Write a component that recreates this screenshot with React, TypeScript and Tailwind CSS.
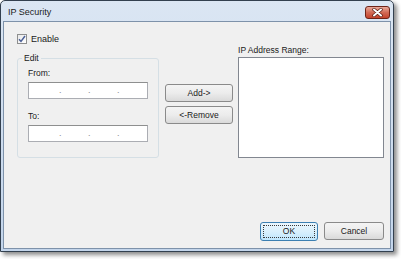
import React from "react";

const font = { fontFamily: '"Liberation Sans", Arial, sans-serif' };

const IpInput = () => (
  <div className="h-[17px] w-[120px] border border-[#abadb3] border-t-[#8e8f8f] bg-white flex items-end pb-[3px] pl-[30px] text-[9px] leading-[9px] text-[#8a8a8a]">
    <span className="w-[29px]">.</span>
    <span className="w-[29px]">.</span>
    <span className="w-[29px]">.</span>
  </div>
);

const Button = ({ label, w, primary }: { label: string; w: string; primary?: boolean }) => (
  <button
    className={
      primary
        ? `${w} h-[19px] rounded-[3px] border border-[#3c7fb1] bg-gradient-to-b from-[#eaf6fd] via-[#d9f0fc] to-[#bee6fd] p-[2px] text-[8.5px] text-[#1a1a1a]`
        : `${w} h-[18px] rounded-[3px] border border-[#8a8a8a] bg-gradient-to-b from-[#f4f4f4] via-[#ececec] to-[#dadada] text-[8.5px] leading-[16px] text-[#1a1a1a]`
    }
  >
    {primary ? (
      <span className="flex h-full w-full items-center justify-center border border-dotted border-[#3a3a3a]">{label}</span>
    ) : (
      label
    )}
  </button>
);

export default function App() {
  return (
    <div className="w-[401px] h-[259px] bg-white" style={font}>
      <div className="flex h-[252px] w-[394px] flex-col rounded-t-[5px] border border-[#33404f] bg-gradient-to-b from-[#dbe6f3] to-[#c3d5eb] px-[2px] pb-[2px] shadow-[3px_3px_4px_rgba(0,0,0,0.45)]">
        {/* title bar */}
        <div className="flex h-[20px] items-start justify-between">
          <span className="pl-[5px] pt-[5px] text-[9px] leading-[12px] text-[#1b1b1b]">IP Security</span>
          <div className="mt-[5px] mr-[1px] flex h-[13px] w-[25px] items-center justify-center rounded-[3px] border border-[#6e2418] bg-gradient-to-b from-[#e9a99a] via-[#d26a55] to-[#c4412a]">
            <svg width="11" height="9" viewBox="0 0 11 9">
              <path d="M2 1.5 L9 7.5 M9 1.5 L2 7.5" stroke="#5a1e14" strokeWidth="3.4" strokeLinecap="round" />
              <path d="M2 1.5 L9 7.5 M9 1.5 L2 7.5" stroke="#ffffff" strokeWidth="2" strokeLinecap="round" />
            </svg>
          </div>
        </div>

        {/* client area */}
        <div className="flex flex-1 flex-col border border-[#7e92aa] bg-[#f0f0f0] pl-[13px] pr-[6px] pt-[12px] pb-[7px] text-[8.5px] text-[#1a1a1a]">
          <div className="flex h-[10px] items-center gap-[4px]">
            <div className="flex h-[10px] w-[10px] items-center justify-center border border-[#8e8f8f] bg-gradient-to-br from-[#e9e9e9] to-white">
              <svg width="8" height="8" viewBox="0 0 8 8">
                <path d="M1 4.2 L3 6.4 L7 1" stroke="#4a5f97" strokeWidth="1.5" fill="none" />
              </svg>
            </div>
            <span className="text-[9px] leading-[10px]">Enable</span>
          </div>

          <div className="flex items-start">
            {/* Edit group */}
            <div className="relative mt-[14px] h-[100px] w-[143px] rounded-[3px] border border-[#d5dfe5] pl-[10px] pt-[8px]">
              <span className="absolute -top-[7px] left-[4px] bg-[#f0f0f0] px-[2px] leading-[12px]">Edit</span>
              <div className="h-[12px] leading-[12px]">From:</div>
              <div className="mt-[3px]">
                <IpInput />
              </div>
              <div className="mt-[11px] h-[12px] leading-[12px]">To:</div>
              <div className="mt-[3px]">
                <IpInput />
              </div>
            </div>

            {/* middle buttons */}
            <div className="ml-[6px] mt-[40px] flex flex-col gap-[4px]">
              <Button label="Add->" w="w-[68px]" />
              <Button label="<-Remove" w="w-[68px]" />
            </div>

            {/* list */}
            <div className="ml-[5px] flex w-[147px] flex-col">
              <div className="h-[13px] leading-[12px]">IP Address Range:</div>
              <div className="h-[101px] border border-[#828790] bg-white" />
            </div>
          </div>

          <div className="mt-auto flex justify-end gap-[6px]">
            <Button label="OK" w="w-[58px]" primary />
            <Button label="Cancel" w="w-[60px]" />
          </div>
        </div>
      </div>
    </div>
  );
}
